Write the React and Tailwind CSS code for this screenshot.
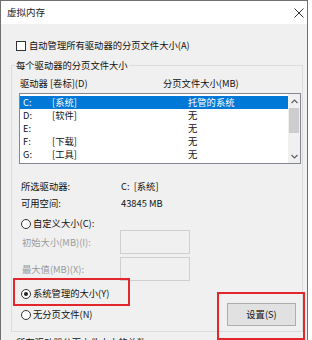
import React from "react";

const F = { fontFamily: '"Noto Sans CJK SC", "Noto Sans", sans-serif' };

function Radio({ checked }) {
  return (
    <span className="w-[10px] h-[10px] rounded-full border border-[#333] bg-white flex items-center justify-center shrink-0">
      {checked && <span className="w-[4px] h-[4px] rounded-full bg-[#222]" />}
    </span>
  );
}

function Row({ d, label, size, selected }) {
  return (
    <div
      className={`h-[13px] flex items-center ${selected ? "bg-[#0078d7] text-white" : "text-[#111]"}`}
    >
      <span className="pl-[3px] w-[32px]">{d}</span>
      <span className="w-[136px]">{label}</span>
      <span>{size}</span>
    </div>
  );
}

export default function App() {
  return (
    <div className="w-[312px] h-[340px] bg-white overflow-hidden text-[9.3px] leading-[13px] text-[#111]" style={F}>
      <div className="relative w-[308px] h-[340px] border-l border-r border-t border-[#707070] bg-[#f0f0f0] flex flex-col">
        {/* title bar */}
        <div className="h-[23px] bg-white flex items-center justify-between pl-[6px] pr-[2px] shrink-0">
          <span className="text-[9.5px] text-[#222]">虚拟内存</span>
          <svg width="10" height="10" viewBox="0 0 10 10" className="mr-[1px]">
            <path d="M0.5 0.5 L9.5 9.5 M9.5 0.5 L0.5 9.5" stroke="#333" strokeWidth="1" />
          </svg>
        </div>

        {/* checkbox */}
        <div className="mt-[15px] h-[13px] flex items-center pl-[15px]">
          <span className="w-[10px] h-[10px] border border-[#333] bg-white shrink-0" />
          <span className="ml-[3px]">自动管理所有驱动器的分页文件大小(A)</span>
        </div>

        {/* group box */}
        <div className="mt-[13px] ml-[10px] w-[292px] h-[267px] border border-[#dcdcdc] shrink-0 flex flex-col">
          <div className="-mt-[7px] h-[13px] flex">
            <span className="ml-[3px] px-[1px] bg-[#f0f0f0]">每个驱动器的分页文件大小</span>
          </div>
          <div className="mt-[5px] h-[13px] flex items-center pl-[8px]">
            <span className="w-[143px]">驱动器 [卷标](D)</span>
            <span>分页文件大小(MB)</span>
          </div>

          {/* listbox */}
          <div className="mt-[3px] ml-[7px] w-[282px] h-[71px] border border-[#828790] bg-white flex">
            <div className="flex-1 pt-[2px]">
              <Row d="C:" label="[系统]" size="托管的系统" selected />
              <Row d="D:" label="[软件]" size="无" />
              <Row d="E:" label="" size="无" />
              <Row d="F:" label="[下载]" size="无" />
              <Row d="G:" label="[工具]" size="无" />
            </div>
            <div className="w-[12px] bg-[#f0f0f0] flex flex-col items-center">
              <div className="h-[14px] flex items-center justify-center">
                <svg width="7" height="5" viewBox="0 0 7 5">
                  <path d="M0.5 4 L3.5 1 L6.5 4" stroke="#606060" strokeWidth="1.2" fill="none" />
                </svg>
              </div>
              <div className="w-[10px] h-[25px] bg-[#cdcdcd]" />
              <div className="flex-1" />
              <div className="h-[14px] flex items-center justify-center">
                <svg width="7" height="5" viewBox="0 0 7 5">
                  <path d="M0.5 1 L3.5 4 L6.5 1" stroke="#606060" strokeWidth="1.2" fill="none" />
                </svg>
              </div>
            </div>
          </div>

          <div className="mt-[16px] h-[13px] flex items-center pl-[9px]">
            <span className="w-[100px]">所选驱动器:</span>
            <span>C:&nbsp;&nbsp;[系统]</span>
          </div>
          <div className="mt-[4px] h-[13px] flex items-center pl-[9px]">
            <span className="w-[100px]">可用空间:</span>
            <span>43845 MB</span>
          </div>

          <div className="mt-[7px] h-[13px] flex items-center pl-[9px]">
            <Radio />
            <span className="ml-[2px]">自定义大小(C):</span>
          </div>
          <div className="h-[24px] flex items-center pl-[10px]">
            <span className="w-[98px] text-[#9a9a9a]">初始大小(MB)(I):</span>
            <span className="w-[70px] h-[24px] border border-[#cfcfcf] bg-[#f0f0f0]" />
          </div>
          <div className="mt-[3px] h-[24px] flex items-center pl-[10px]">
            <span className="w-[98px] text-[#9a9a9a]">最大值(MB)(X):</span>
            <span className="w-[70px] h-[24px] border border-[#cfcfcf] bg-[#f0f0f0]" />
          </div>

          <div className="flex items-start justify-between">
            <div className="flex flex-col pl-[9px]">
              <div className="mt-[6px] h-[13px] flex items-center">
                <Radio checked />
                <span className="ml-[2px]">系统管理的大小(Y)</span>
              </div>
              <div className="mt-[8px] h-[13px] flex items-center">
                <Radio />
                <span className="ml-[2px]">无分页文件(N)</span>
              </div>
            </div>
            <button className="mt-[22px] mr-[6px] w-[69px] h-[23px] border border-[#adadad] bg-[#e1e1e1] flex items-center justify-center text-[#111]">
              设置(S)
            </button>
          </div>
        </div>

        <div className="mt-[4px] h-[13px] pl-[15px] flex items-center shrink-0">
          所有驱动器分页文件大小的总数
        </div>

        {/* red annotation boxes */}
        <div className="absolute left-[12px] top-[277px] w-[117px] h-[28px] border-2 border-[#e3262b]" />
        <div className="absolute left-[216px] top-[291px] w-[88px] h-[48px] border-2 border-[#e3262b]" />
      </div>
    </div>
  );
}
